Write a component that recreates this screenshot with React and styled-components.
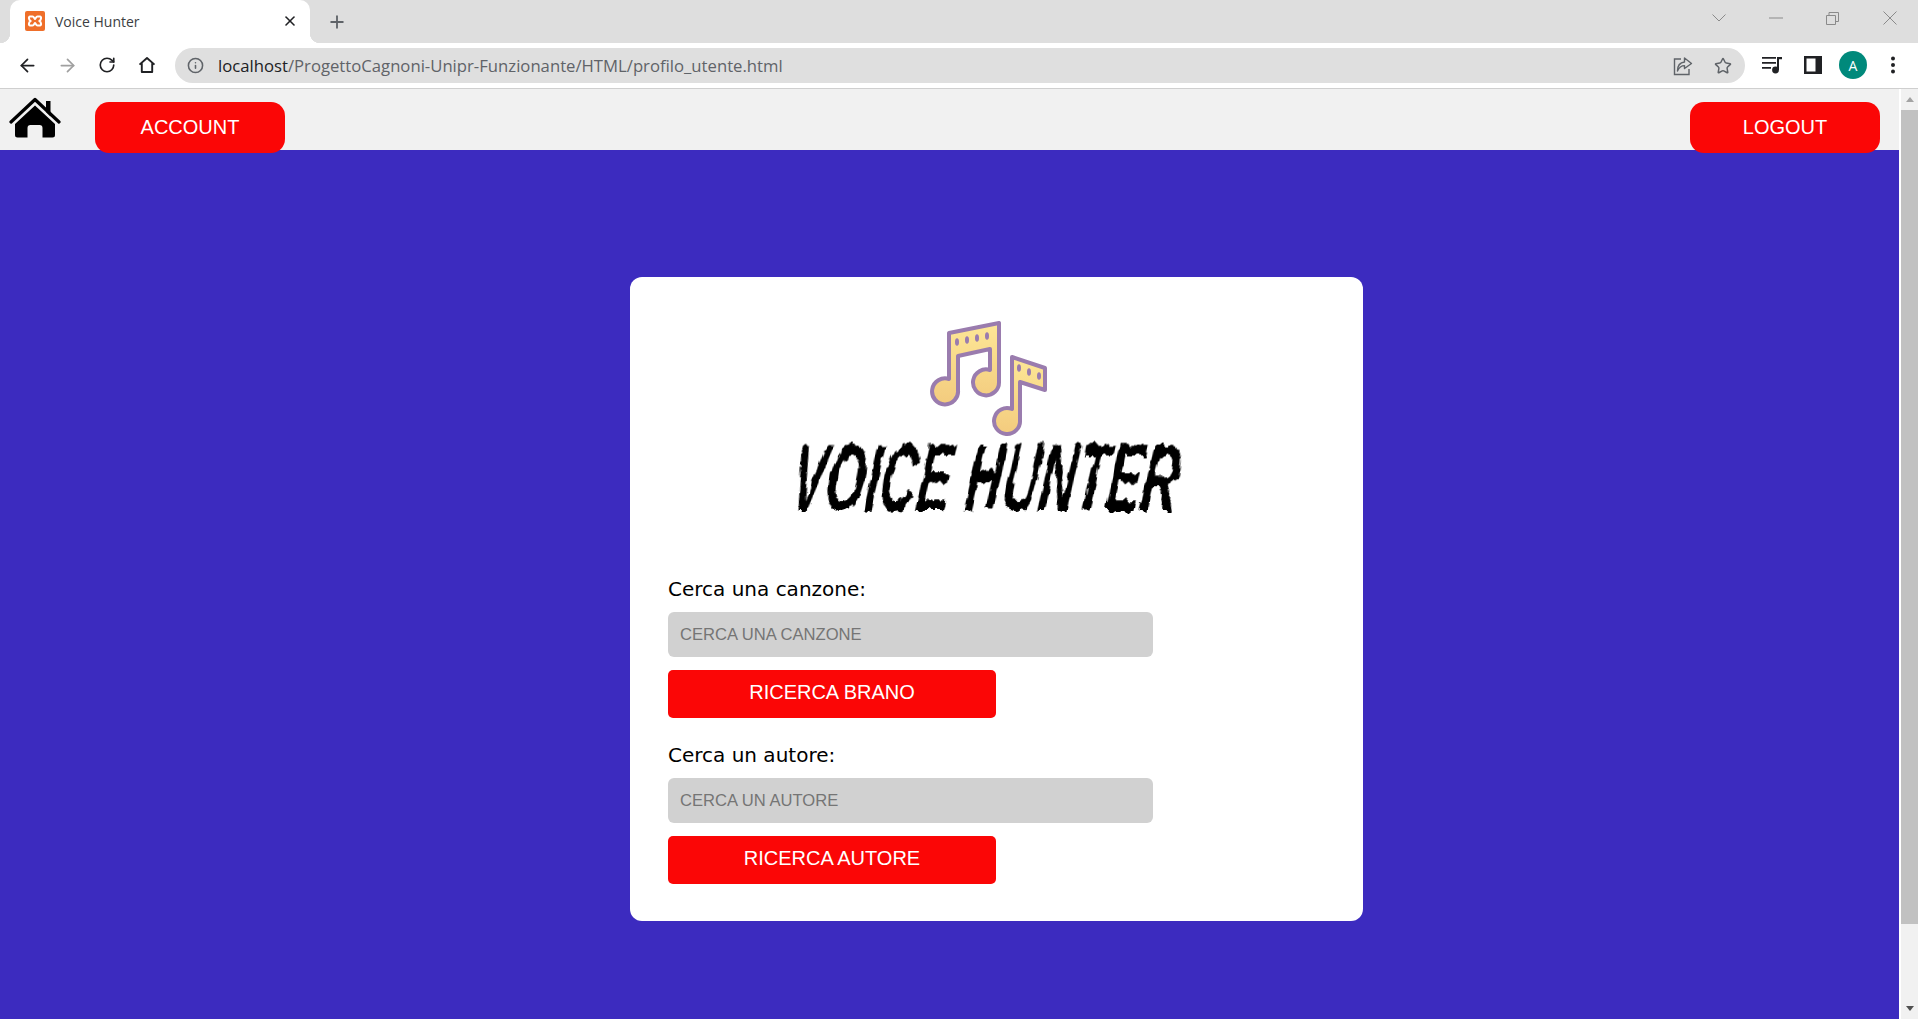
import React from 'react';
import styled, { createGlobalStyle } from 'styled-components';
import { ArrowLeft, ArrowRight, RotateCw, Info, Star, X, Plus } from 'lucide-react';

const GlobalStyle = createGlobalStyle`
  html, body { margin: 0; padding: 0; height: 1019px; overflow: hidden; background: #fff; }
  * { box-sizing: border-box; }
  #root { height: 1019px; }
`;

const Window = styled.div`
  width: 1918px; height: 1019px; display: flex; flex-direction: column;
  font-family: "Liberation Sans", Arial, sans-serif;
`;

/* ===== Browser chrome ===== */
const TabStrip = styled.div`
  height: 43px; flex: none; display: flex; background: #dedede; padding-left: 10px;
`;
const Tab = styled.div`
  position: relative; width: 300px; height: 43px; background: #fff;
  border-radius: 10px 10px 0 0; display: flex; align-items: center;
  padding: 0 12px 1px 15px; font: 14px "Open Sans", "Noto Sans", sans-serif; color: #3c4043;
  &::before, &::after {
    content: ''; position: absolute; bottom: 0; width: 10px; height: 10px;
  }
  &::before { left: -10px; background: radial-gradient(circle at 0 0, transparent 10px, #fff 10.5px); }
  &::after { right: -10px; background: radial-gradient(circle at 100% 0, transparent 10px, #fff 10.5px); }
`;
const TabTitle = styled.span` margin-left: 10px; flex: 1; `;
const NewTab = styled.div`
  width: 28px; height: 43px; margin-left: 13px; display: grid; place-items: center; color: #5f6368;
`;
const WindowControls = styled.div` margin-left: auto; display: flex; `;
const WindowButton = styled.div`
  width: 57px; height: 36px; display: grid; place-items: center; color: #8a8a8a;
`;
const Toolbar = styled.div`
  height: 46px; flex: none; display: flex; align-items: flex-start; padding: 0 5px 0 7px;
  background: #fff; border-bottom: 1px solid #cfcfcf;
`;
const ToolButton = styled.div`
  width: 40px; height: 45px; flex: none; display: grid; place-items: center; padding-bottom: 1px;
  color: ${(p) => p.$color || '#3c4043'};
`;
const UrlPill = styled.div`
  flex: 1; height: 35px; margin: 5px 8px 0; border-radius: 18px; background: #dfdfdf;
  display: flex; align-items: center; padding: 0 2px 0 12px; color: #5f6368;
  font: 16.7px "Open Sans", "Noto Sans", sans-serif;
`;
const UrlText = styled.div` margin-left: 14px; flex: 1; white-space: nowrap; `;
const UrlHost = styled.span` color: #202124; `;
const PillButton = styled.div`
  width: 40px; height: 35px; display: grid; place-items: center; color: #5f6368;
`;
const Avatar = styled.div`
  width: 28px; height: 28px; border-radius: 50%; background: #00897b; color: #fff;
  display: grid; place-items: center; font: 14px "Open Sans", sans-serif;
`;

/* ===== Page ===== */
const Viewport = styled.div` flex: 1; display: flex; min-height: 0; `;
const Page = styled.div` flex: 1; display: flex; flex-direction: column; min-width: 0; `;
const Navbar = styled.nav`
  height: 61px; flex: none; display: flex; align-items: flex-start; position: relative; z-index: 1;
  background: #f1f1f1; padding: 13px 19px 0 9px;
`;
const HomeLink = styled.a`
  display: block; width: 52px; height: 42px; margin: -5px 34px 0 0; color: #000; line-height: 0;
`;
const NavButton = styled.button`
  width: 190px; height: 51px; flex: none; border: 0; border-radius: 14px; background: #fb0606; color: #fff;
  font: 20px "Liberation Sans", Arial, sans-serif; margin-left: ${(p) => (p.$end ? 'auto' : '0')};
  padding: 0 0 1px;
`;
const Main = styled.main`
  flex: 1; background: #3c2bbf; padding: 127px 0 0 630px;
`;
const Card = styled.section`
  width: 733px; height: 644px; background: #fff; border-radius: 12px; padding: 41px 38px 0;
`;
const Logo = styled.div`
  width: 388px; margin-left: 129px; display: flex; flex-direction: column; align-items: center;
`;
const LogoIcon = styled.svg`
  width: 125px; height: 120px; margin-left: -7px; filter: blur(0.7px);
`;
const LogoText = styled.div`
  align-self: flex-start; height: 80px; white-space: nowrap; color: #000;
  font: italic 900 64px/80px "Liberation Sans", Arial, sans-serif; letter-spacing: 1px;
  transform-origin: 0 50%; transform: scale(0.78, 1.48) skewX(-14deg) translateX(-5px);
  filter: url(#brush);
`;
const SearchForm = styled.form` margin-top: 60px; display: flex; flex-direction: column; `;
const FieldLabel = styled.label`
  font: 20px/22px "DejaVu Sans", Verdana, sans-serif; color: #000; margin-bottom: 12px;
`;
const SearchInput = styled.input`
  width: 485px; height: 45px; border: 0; border-radius: 6px; background: #d1d1d1; padding: 0 12px;
  font: 16.6px "Liberation Sans", Arial, sans-serif; color: #333; outline: none;
  &::placeholder { color: #757575; opacity: 1; }
`;
const SearchButton = styled.button`
  width: 328px; height: 48px; margin: 13px 0 26px; border: 0; border-radius: 5px; background: #fb0606; color: #fff;
  font: 20px "Liberation Sans", Arial, sans-serif; padding: 0 0 3px;
`;
const Scrollbar = styled.div`
  width: 19px; flex: none; border-left: 2px solid #fff; background: #f1f1f1;
  display: flex; flex-direction: column; align-items: center;
`;
const ScrollArrow = styled.div`
  height: 21px; width: 100%; flex: none; display: grid; place-items: center;
  &::before {
    content: ''; border-left: 4.5px solid transparent; border-right: 4.5px solid transparent;
    ${(p) => (p.$down ? 'border-top: 5px solid #505050;' : 'border-bottom: 5px solid #a3a3a3;')}
  }
`;
const ScrollThumb = styled.div` width: 100%; height: 814px; flex: none; background: #c1c1c1; `;
const ScrollTrack = styled.div` flex: 1; `;

/* ===== Disegni ===== */
const Xampp = () => (
  <svg width="20" height="20" viewBox="0 0 20 20">
    <rect width="20" height="20" rx="2" fill="#ef6f2a" />
    <path d="M5 5.5h2.5c1.5 0 2 2.5 2.5 2.5s1-2.5 2.5-2.5H15c1.5 0 1.5 3-.5 4.5 2 1.5 2 4.5.5 4.5h-2.5c-1.5 0-2-2.5-2.5-2.5s-1 2.5-2.5 2.5H5c-1.5 0-1.5-3 .5-4.5-2-1.5-2-4.5-.5-4.5z" fill="none" stroke="#fff" strokeWidth="2" />
  </svg>
);

const HouseIcon = () => (
  <svg width="52" height="42" viewBox="0 0 52 42">
    <path d="M2 25 26 2.5 50 25" fill="none" stroke="#000" strokeWidth="3.2" strokeLinecap="round" strokeLinejoin="round" />
    <path d="M37 4h4.5v15.5L37 15Z" fill="#000" />
    <path d="M26 8.5 46 27v11a2.5 2.5 0 0 1-2.5 2.5H33.5V31a3 3 0 0 0-3-3h-9a3 3 0 0 0-3 3v9.5H8.5A2.5 2.5 0 0 1 6 38V27Z" fill="#000" />
  </svg>
);

const ChromeHome = () => (
  <svg width="18" height="18" viewBox="0 0 18 18" fill="none" stroke="#202124" strokeWidth="1.9">
    <path d="M1.5 8.6 9 2l7.5 6.6M3.8 7.2V16h10.4V7.2" strokeLinejoin="round" />
  </svg>
);
const ShareIcon = () => (
  <svg width="20" height="20" viewBox="0 0 20 20" fill="none" stroke="#5f6368" strokeWidth="1.4">
    <path d="M8 3H1.5v15.5H16V13" />
    <path d="M11.5 2 18.5 7.5 11.5 12.5V9.6C7.5 9.6 6 11.5 4.5 15c0-5 2-8.5 7-9z" strokeLinejoin="round" />
  </svg>
);
const QueueIcon = () => (
  <svg width="22" height="18" viewBox="0 0 22 18" fill="#202124">
    <path d="M0 1h14v1.8H0zM0 6h14v1.8H0zM0 11h9v1.8H0zM15 1h5v2.2h-3V14h-2z" />
    <circle cx="13.5" cy="14" r="3.4" />
  </svg>
);
const SidebarIcon = () => (
  <svg width="18" height="18" viewBox="0 0 18 18">
    <path d="M0 0h18v18H0z" fill="#202124" />
    <path d="M2.5 2.5h9v13h-9z" fill="#fff" />
  </svg>
);
const MenuDots = () => (
  <svg width="6" height="18" viewBox="0 0 6 18" fill="#202124">
    <circle cx="3" cy="2.5" r="2" /><circle cx="3" cy="9" r="2" /><circle cx="3" cy="15.5" r="2" />
  </svg>
);
const ThinChevron = () => (
  <svg width="14" height="8" viewBox="0 0 14 8" fill="none" stroke="#8a8a8a"><path d="M.5.5 7 7 13.5.5" /></svg>
);
const ThinMinimize = () => (
  <svg width="14" height="2" viewBox="0 0 14 2" stroke="#8a8a8a"><path d="M0 1h14" /></svg>
);
const ThinRestore = () => (
  <svg width="13" height="13" viewBox="0 0 13 13" fill="none" stroke="#8a8a8a">
    <path d="M.5 3.5h9v9h-9zM3 3.5V.5h9.5v9h-3" />
  </svg>
);
const ThinClose = () => (
  <svg width="14" height="14" viewBox="0 0 14 14" stroke="#8a8a8a"><path d="M.5.5l13 13M13.5.5l-13 13" /></svg>
);

const BrushFilter = () => (
  <svg width="0" height="0" style={{ position: 'absolute' }}>
    <filter id="brush" x="-5%" y="-15%" width="110%" height="130%">
      <feTurbulence type="fractalNoise" baseFrequency="0.12 0.09" numOctaves="3" seed="7" />
      <feDisplacementMap in="SourceGraphic" scale="7" />
    </filter>
  </svg>
);

const Notes = () => (
  <LogoIcon viewBox="0 0 125 120">
    <defs>
      <linearGradient id="noteFill" x1="0" y1="0" x2="0" y2="1">
        <stop offset="0" stopColor="#fde796" />
        <stop offset="1" stopColor="#f3cb7e" />
      </linearGradient>
    </defs>
    <g fill="url(#noteFill)" stroke="#9a7cae" strokeWidth="4" strokeLinejoin="round">
      <path d="M24 15 74 5V64A13 13 0 1 1 65 52V31L33 38V72A13 13 0 1 1 24 61Z" />
      <path d="M87 39 120 50V72L95 64V102A13 13 0 1 1 87 91Z" />
    </g>
    <g fill="#9a7cae">
      <ellipse cx="32" cy="24" rx="2" ry="3.8" />
      <ellipse cx="42" cy="22" rx="2" ry="3.8" />
      <ellipse cx="52" cy="20" rx="2" ry="3.8" />
      <ellipse cx="62" cy="18" rx="2" ry="3.8" />
      <ellipse cx="94" cy="50" rx="2" ry="3.8" />
      <ellipse cx="104" cy="54" rx="2" ry="3.8" />
      <ellipse cx="114" cy="58" rx="2" ry="3.8" />
    </g>
  </LogoIcon>
);

export default function App() {
  return (
    <Window>
      <GlobalStyle />
      <BrushFilter />
      <TabStrip>
        <Tab>
          <Xampp />
          <TabTitle>Voice Hunter</TabTitle>
          <X size={16} color="#202124" strokeWidth={2.4} />
        </Tab>
        <NewTab><Plus size={20} strokeWidth={2.2} /></NewTab>
        <WindowControls>
          <WindowButton><ThinChevron /></WindowButton>
          <WindowButton><ThinMinimize /></WindowButton>
          <WindowButton><ThinRestore /></WindowButton>
          <WindowButton><ThinClose /></WindowButton>
        </WindowControls>
      </TabStrip>
      <Toolbar>
        <ToolButton><ArrowLeft size={21} color="#202124" /></ToolButton>
        <ToolButton><ArrowRight size={21} color="#a0a0a0" /></ToolButton>
        <ToolButton><RotateCw size={18} color="#202124" strokeWidth={2.2} /></ToolButton>
        <ToolButton><ChromeHome /></ToolButton>
        <UrlPill>
          <Info size={17} color="#5f6368" strokeWidth={2.2} />
          <UrlText><UrlHost>localhost</UrlHost>/ProgettoCagnoni-Unipr-Funzionante/HTML/profilo_utente.html</UrlText>
          <PillButton><ShareIcon /></PillButton>
          <PillButton><Star size={18} strokeWidth={2} /></PillButton>
        </UrlPill>
        <ToolButton><QueueIcon /></ToolButton>
        <ToolButton><SidebarIcon /></ToolButton>
        <ToolButton><Avatar>A</Avatar></ToolButton>
        <ToolButton><MenuDots /></ToolButton>
      </Toolbar>
      <Viewport>
        <Page>
          <Navbar>
            <HomeLink><HouseIcon /></HomeLink>
            <NavButton>ACCOUNT</NavButton>
            <NavButton $end>LOGOUT</NavButton>
          </Navbar>
          <Main>
            <Card>
              <Logo>
                <Notes />
                <LogoText>VOICE HUNTER</LogoText>
              </Logo>
              <SearchForm>
                <FieldLabel>Cerca una canzone:</FieldLabel>
                <SearchInput placeholder="CERCA UNA CANZONE" />
                <SearchButton type="button">RICERCA BRANO</SearchButton>
                <FieldLabel>Cerca un autore:</FieldLabel>
                <SearchInput placeholder="CERCA UN AUTORE" />
                <SearchButton type="button">RICERCA AUTORE</SearchButton>
              </SearchForm>
            </Card>
          </Main>
        </Page>
        <Scrollbar>
          <ScrollArrow />
          <ScrollThumb />
          <ScrollTrack />
          <ScrollArrow $down />
        </Scrollbar>
      </Viewport>
    </Window>
  );
}
